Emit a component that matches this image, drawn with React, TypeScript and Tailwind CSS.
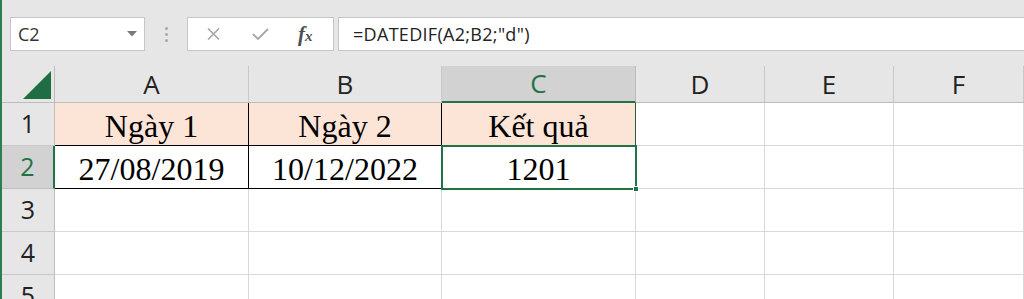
import React from 'react';

const cols = [
  { key: 'A', w: 'w-[194px]' },
  { key: 'B', w: 'w-[193px]' },
  { key: 'C', w: 'w-[194px]' },
  { key: 'D', w: 'w-[129px]' },
  { key: 'E', w: 'w-[129px]' },
  { key: 'F', w: 'w-[130px]' },
];

const data: Record<number, string[]> = {
  1: ['Ngày 1', 'Ngày 2', 'Kết quả'],
  2: ['27/08/2019', '10/12/2022', '1201'],
};

function cellClass(row: number, col: number) {
  // table borders around A1:C2
  let cls = 'h-full border-b border-r flex items-center justify-center pt-[3px]';
  if (row === 1 && col < 3) cls += ' bg-[#fce4d6]';
  if ((row === 1 || row === 2) && col < 2) cls += ' border-r-black border-b-black';
  else if (row === 1 && col === 2) cls += ' border-r-[#2b5e3f] border-b-[#2b5e3f]';
  else cls += ' border-r-[#d9d9d9] border-b-[#d9d9d9]';
  return cls;
}

function Toolbar() {
  return (
    <div className="flex h-[66px] items-start bg-[#e6e6e6] pl-[8px] pt-[17px]">
      <div className="flex h-[34px] w-[135px] items-center justify-between border border-[#c6c6c6] bg-white pl-[7px] pr-[7px]">
        <span className="text-[18px] text-[#333]" style={{ fontFamily: '"Open Sans", sans-serif' }}>C2</span>
        <svg width="10" height="6" viewBox="0 0 10 6">
          <path d="M0 0 L10 0 L5 5.5 Z" fill="#7a7a7a" />
        </svg>
      </div>
      <div className="flex h-[34px] w-[42px] flex-col items-center justify-center gap-[3px]">
        <span className="h-[3px] w-[3px] rounded-full bg-[#a8a8a8]" />
        <span className="h-[3px] w-[3px] rounded-full bg-[#a8a8a8]" />
        <span className="h-[3px] w-[3px] rounded-full bg-[#a8a8a8]" />
      </div>
      <div className="flex h-[34px] w-[147px] items-center border border-[#c6c6c6] bg-white">
        <svg className="ml-[19px]" width="13" height="12" viewBox="0 0 13 12">
          <path d="M1 0.5 L12 11.5 M12 0.5 L1 11.5" stroke="#a6a6a6" strokeWidth="1.6" />
        </svg>
        <svg className="ml-[32px]" width="17" height="12" viewBox="0 0 17 12">
          <path d="M1 6 L6 11 L16 1" stroke="#a6a6a6" strokeWidth="1.8" fill="none" />
        </svg>
        <span
          className="ml-[29px] text-[21px] italic font-bold leading-none text-[#505050]"
          style={{ fontFamily: '"Liberation Serif", serif' }}
        >
          f<span className="text-[15px]">x</span>
        </span>
      </div>
      <div className="ml-[4px] flex h-[34px] flex-1 items-center border border-r-0 border-[#c6c6c6] bg-white pl-[14px]">
        <span className="text-[18px] tracking-[0.3px] text-[#222]" style={{ fontFamily: '"Open Sans", sans-serif' }}>
          =DATEDIF(A2;B2;"d")
        </span>
      </div>
    </div>
  );
}

export default function App() {
  const rows = [1, 2, 3, 4, 5];
  return (
    <div className="relative h-[299px] w-[1024px] overflow-hidden bg-white">
      <div className="flex h-full">
        <div className="w-[2px] shrink-0 bg-[#2f7d50]" />
        <div className="flex-1">
          <Toolbar />
          {/* column headers */}
          <div className="flex h-[37px] bg-[#e6e6e6]" style={{ fontFamily: '"Open Sans", sans-serif' }}>
            <div className="relative h-full w-[53px] border-r border-b border-r-[#bdbdbd] border-b-[#bdbdbd]">
              <svg className="absolute left-[21px] top-[5px]" width="29" height="28" viewBox="0 0 29 28">
                <path d="M28 0 L28 28 L0 28 Z" fill="#1f6e43" />
              </svg>
            </div>
            {cols.map((c) => (
              <div
                key={c.key}
                className={`${c.w} flex h-full items-center justify-center border-r text-[26px] ${
                  c.key === 'C'
                    ? 'border-r-[#bdbdbd] border-b-2 border-b-[#217346] bg-[#d2d2d2] text-[#217346]'
                    : 'border-b border-r-[#c8c8c8] border-b-[#bdbdbd] text-[#222]'
                }`}
              >
                {c.key}
              </div>
            ))}
          </div>
          {rows.map((r) => (
            <div key={r} className="flex h-[43px]">
              <div
                className={`flex h-full w-[53px] items-center justify-center border-b text-[25px] ${
                  r === 2
                    ? 'border-r-2 border-r-[#217346] border-b-[#bdbdbd] bg-[#d2d2d2] text-[#217346]'
                    : 'border-r border-r-[#bdbdbd] border-b-[#c8c8c8] bg-[#e6e6e6] text-[#222]'
                }`}
                style={{ fontFamily: '"Open Sans", sans-serif' }}
              >
                {r}
              </div>
              {cols.map((c, ci) => (
                <div key={c.key} className={`${c.w} ${cellClass(r, ci)}`}>
                  <span className="text-[32px] leading-none text-black" style={{ fontFamily: '"Liberation Serif", serif' }}>
                    {data[r]?.[ci] ?? ''}
                  </span>
                </div>
              ))}
            </div>
          ))}
        </div>
      </div>
      {/* active cell selection C2 */}
      <div className="pointer-events-none absolute left-[441px] top-[145px] h-[45px] w-[196px] border-2 border-[#217346]" />
      <div className="absolute left-[633px] top-[186px] h-[6px] w-[6px] border border-white bg-[#217346]" />
    </div>
  );
}
